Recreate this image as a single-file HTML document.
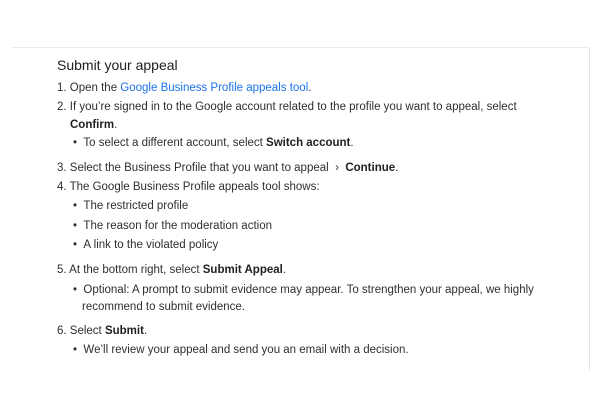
<!DOCTYPE html>
<html><head><meta charset="utf-8"><style>
body{margin:0;width:600px;height:400px;background:#fff;position:relative;overflow:hidden;font-family:"Liberation Sans",Arial,sans-serif;color:#202124}
.card{position:absolute;left:12px;top:47px;width:577px;height:322px;border-top:1px solid #ececec;border-right:1px solid #e4e4e4}
.l{position:absolute;font-size:11.5px;white-space:nowrap;line-height:14px;color:#2e2f33}
h1{position:absolute;left:57px;top:57px;margin:0;font-size:14px;font-weight:normal;color:#202124}
b{font-weight:bold;color:#202124}
a{color:#1a73e8;text-decoration:none}
</style></head><body>
<div class="card"></div>
<h1>Submit your appeal</h1>
<div class="l" style="left:57px;top:81px">1. Open the <a>Google Business Profile appeals tool</a>.</div>
<div class="l" style="left:57px;top:100px">2. If you’re signed in to the Google account related to the profile you want to appeal, select</div>
<div class="l" style="left:70px;top:118px"><b>Confirm</b>.</div>
<div class="l" style="left:73px;top:136px">• &nbsp;To select a different account, select <b>Switch account</b>.</div>
<div class="l" style="left:57px;top:161px">3. Select the Business Profile that you want to appeal &nbsp;›&nbsp; <b>Continue</b>.</div>
<div class="l" style="left:57px;top:180px">4. The Google Business Profile appeals tool shows:</div>
<div class="l" style="left:73px;top:199px">• &nbsp;The restricted profile</div>
<div class="l" style="left:73px;top:219px">• &nbsp;The reason for the moderation action</div>
<div class="l" style="left:73px;top:238px">• &nbsp;A link to the violated policy</div>
<div class="l" style="left:57px;top:263px">5. At the bottom right, select <b>Submit Appeal</b>.</div>
<div class="l" style="left:73px;top:283px">• &nbsp;Optional: A prompt to submit evidence may appear. To strengthen your appeal, we highly</div>
<div class="l" style="left:82px;top:300px">recommend to submit evidence.</div>
<div class="l" style="left:57px;top:324px">6. Select <b>Submit</b>.</div>
<div class="l" style="left:73px;top:343px">• &nbsp;We’ll review your appeal and send you an email with a decision.</div>
</body></html>
